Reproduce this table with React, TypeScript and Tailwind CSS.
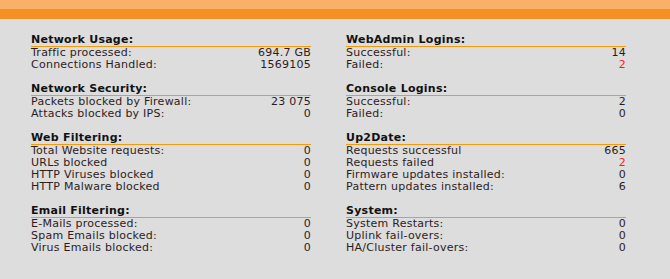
import React from "react";

type Row = { label: string; value: string; red?: boolean };
type Section = { title: string; rows: Row[] };

const left: Section[] = [
  {
    title: "Network Usage:",
    rows: [
      { label: "Traffic processed:", value: "694.7 GB" },
      { label: "Connections Handled:", value: "1569105" },
    ],
  },
  {
    title: "Network Security:",
    rows: [
      { label: "Packets blocked by Firewall:", value: "23 075" },
      { label: "Attacks blocked by IPS:", value: "0" },
    ],
  },
  {
    title: "Web Filtering:",
    rows: [
      { label: "Total Website requests:", value: "0" },
      { label: "URLs blocked", value: "0" },
      { label: "HTTP Viruses blocked", value: "0" },
      { label: "HTTP Malware blocked", value: "0" },
    ],
  },
  {
    title: "Email Filtering:",
    rows: [
      { label: "E-Mails processed:", value: "0" },
      { label: "Spam Emails blocked:", value: "0" },
      { label: "Virus Emails blocked:", value: "0" },
    ],
  },
];

const right: Section[] = [
  {
    title: "WebAdmin Logins:",
    rows: [
      { label: "Successful:", value: "14" },
      { label: "Failed:", value: "2", red: true },
    ],
  },
  {
    title: "Console Logins:",
    rows: [
      { label: "Successful:", value: "2" },
      { label: "Failed:", value: "0" },
    ],
  },
  {
    title: "Up2Date:",
    rows: [
      { label: "Requests successful", value: "665" },
      { label: "Requests failed", value: "2", red: true },
      { label: "Firmware updates installed:", value: "0" },
      { label: "Pattern updates installed:", value: "6" },
    ],
  },
  {
    title: "System:",
    rows: [
      { label: "System Restarts:", value: "0" },
      { label: "Uplink fail-overs:", value: "0" },
      { label: "HA/Cluster fail-overs:", value: "0" },
    ],
  },
];

function SectionBlock({ s }: { s: Section }) {
  return (
    <div className="mb-[12px]">
      <div className="h-[13px] leading-[12px] font-bold text-[#111111] border-b border-[#f59a0c]">
        {s.title}
      </div>
      {s.rows.map((r, i) => (
        <div key={i} className="flex justify-between h-[12px] leading-[12px]">
          <span>{r.label}</span>
          <span className={r.red ? "text-[#ff1a1a]" : ""}>{r.value}</span>
        </div>
      ))}
    </div>
  );
}

export default function App() {
  return (
    <div
      className="w-[670px] h-[279px] bg-[#dddddd] text-[11px] tracking-[0.25px] text-[#2e1c1c] overflow-hidden"
      style={{ fontFamily: '"DejaVu Sans", Verdana, sans-serif' }}
    >
      <div className="h-[9px] bg-[#f9b068]" />
      <div className="h-[10px] bg-[#f59025]" />
      <div className="flex gap-[35px] pl-[31px] pt-[15px]">
        <div className="w-[280px]">
          {left.map((s, i) => (
            <SectionBlock key={i} s={s} />
          ))}
        </div>
        <div className="w-[280px]">
          {right.map((s, i) => (
            <SectionBlock key={i} s={s} />
          ))}
        </div>
      </div>
    </div>
  );
}
